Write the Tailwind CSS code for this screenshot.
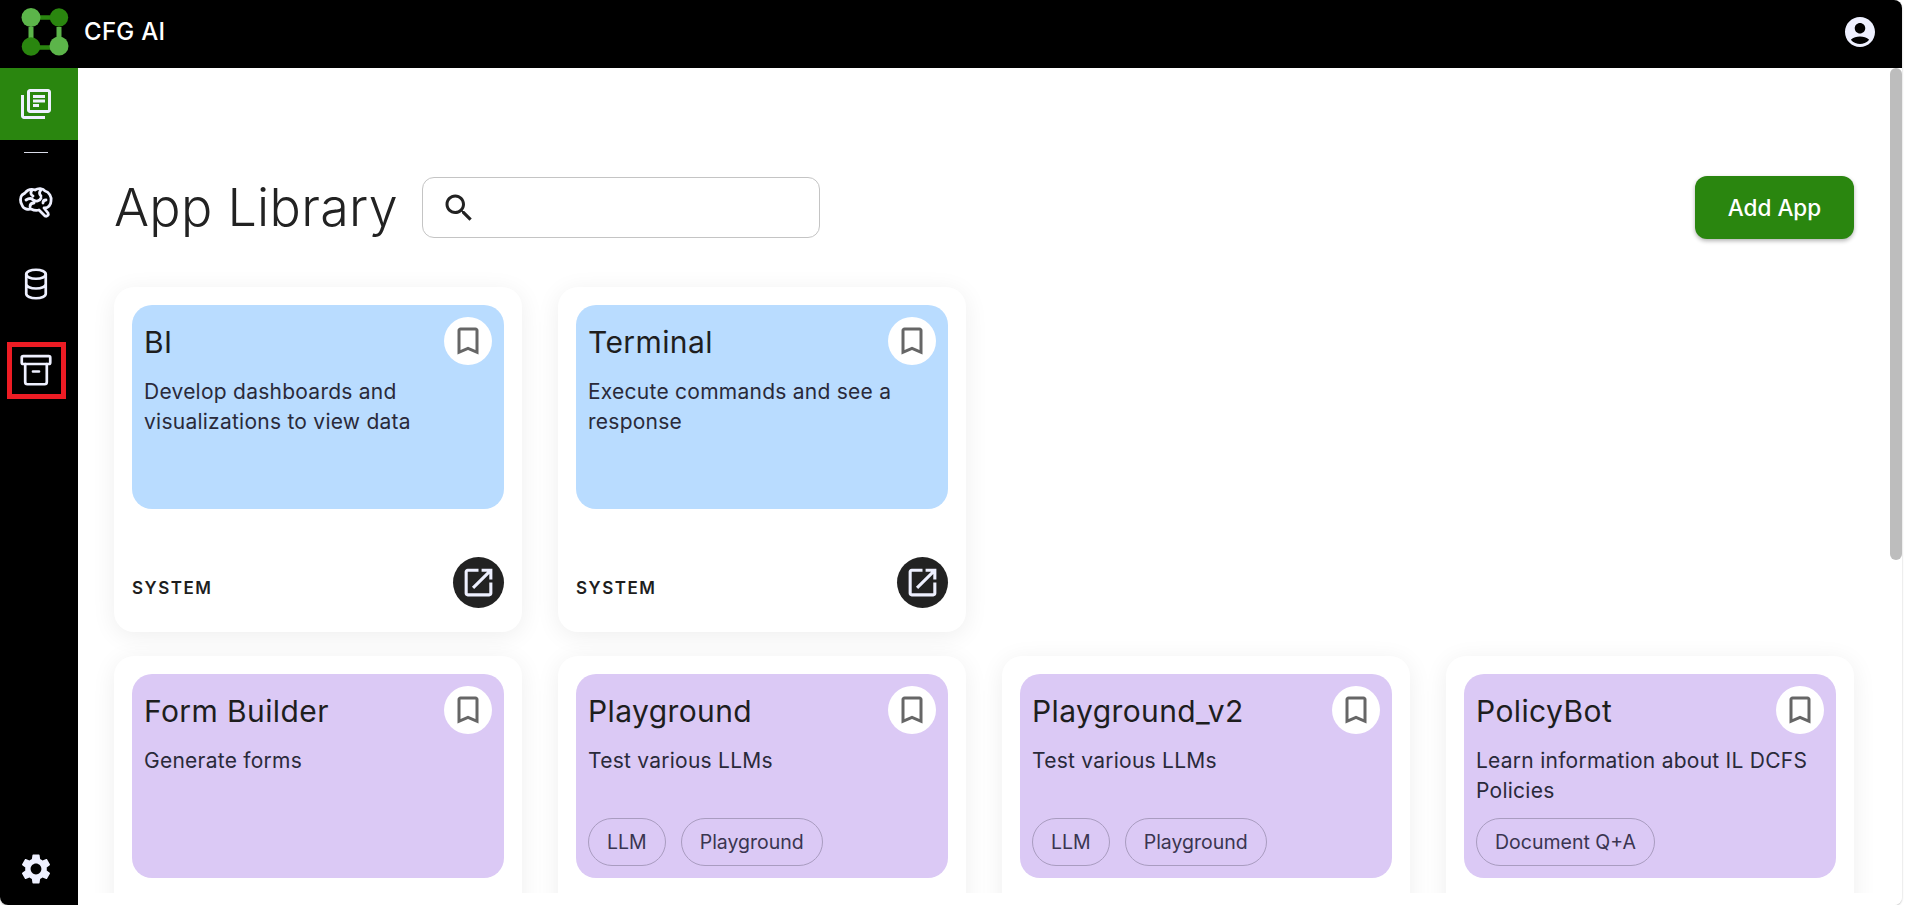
<!doctype html>
<html>
<head>
<meta charset="utf-8">
<script src="https://cdn.jsdelivr.net/npm/@tailwindcss/browser@4"></script>
</head>
<body class="bg-white font-['Inter',sans-serif] overflow-hidden">
<div class="w-[1902px] h-[905px] rounded-tr-[8px] rounded-b-[8px] overflow-hidden flex flex-col shadow-[0_1px_2px_rgba(0,0,0,0.25)]">
  <header class="h-[68px] shrink-0 bg-black flex items-center justify-between pl-[20px] pr-[24px]">
    <div class="flex items-center gap-[14px]">
      <svg width="50" height="52" viewBox="0 0 50 52" class="-mt-[4px]">
        <path d="M11 21v14M39 21v14" stroke="#5cb54a" stroke-width="5" fill="none"/>
        <path d="M18 11.500h16M16 41.500h16" stroke="#2a860f" stroke-width="4.500" fill="none"/>
        <circle cx="11" cy="11.500" r="9.500" fill="#5cb54a"/>
        <circle cx="39" cy="11.500" r="9.200" fill="#2a860f"/>
        <circle cx="11" cy="40.500" r="9.300" fill="#2a860f"/>
        <circle cx="39" cy="40" r="9.500" fill="#5cb54a"/>
      </svg>
      <span class="text-white text-[24px] font-medium tracking-[0.3px] -mt-[4px]">CFG AI</span>
    </div>
    <svg width="36" height="36" viewBox="0 0 24 24" fill="#eef0ff" class="-mt-[4px] mr-[0px]"><path d="M12 2C6.480 2 2 6.480 2 12s4.480 10 10 10 10-4.480 10-10S17.520 2 12 2zm0 4c1.930 0 3.500 1.570 3.500 3.500S13.930 13 12 13s-3.500-1.570-3.500-3.500S10.070 6 12 6zm0 14c-2.030 0-4.430-.82-6.140-2.880C7.550 15.800 9.680 15 12 15s4.450.8 6.140 2.120C16.430 19.180 14.030 20 12 20z"/></svg>
  </header>
  <div class="flex-1 flex min-h-0">
    <aside class="w-[78px] shrink-0 bg-black flex flex-col items-center relative pb-[18px] pr-[6px]">
      <div class="w-[78px] -mr-[6px] pr-[6px] h-[72px] bg-[#2a860f] flex items-center justify-center">
        <svg width="36" height="36" viewBox="0 0 24 24" fill="#eef0ff"><path d="M4 6H2v14c0 1.100.9 2 2 2h14v-2H4V6zm16-4H8c-1.100 0-2 .9-2 2v12c0 1.100.9 2 2 2h12c1.100 0 2-.9 2-2V4c0-1.100-.9-2-2-2zm0 14H8V4h12v12zM10 9h8v2h-8zm0 3h4v2h-4zm0-6h8v2h-8z"/></svg>
      </div>
      <div class="w-[24px] h-px bg-[#d8dbe8] mt-[12px]"></div>
      <svg class="mt-[23px]" width="48" height="48" viewBox="0 0 48 48" fill="none" stroke="#eef0ff" stroke-width="2.800" stroke-linecap="round" stroke-linejoin="round"><path d="M13 17c3-4 7-4 10-3 3-2 8-2 10 1 4 1 7 6 6 10 0 4-3 7-6 7h-1l4 5c1 2-1 4-3 3l-6-6c-3 1-6 0-8-1-3 1-8 0-9-4-2-3-2-8 0-10z"/><path d="M14 24c3-2 6-2 7 0 3 2 7 1 8-2M20 14c-2 3-1 5 1 6M29 14c-2 2-2 4 0 6M34 24c-2 0-3 1-3 3M18 31c0-2 1-4 4-4"/></svg>
      <svg class="mt-[42px]" width="36" height="36" viewBox="0 0 24 24" fill="none" stroke="#eef0ff" stroke-width="1.800" stroke-linecap="round" stroke-linejoin="round"><ellipse cx="12" cy="5.500" rx="6.500" ry="3"/><path d="M5.500 5.500v13c0 1.700 2.900 3 6.500 3s6.500-1.300 6.500-3v-13M5.500 12c0 1.700 2.900 3 6.500 3s6.500-1.300 6.500-3"/></svg>
      <svg class="mt-[50px]" width="36" height="36" viewBox="0 0 24 24" fill="none" stroke="#eef0ff" stroke-width="1.800" stroke-linecap="round" stroke-linejoin="round"><rect x="2.500" y="2.800" width="19" height="5.200" rx="1"/><path d="M4.800 8v12a1.500 1.500 0 0 0 1.500 1.500h11.400a1.500 1.500 0 0 0 1.500-1.500V8M10 13h4"/></svg>
      <div class="absolute left-[7px] top-[274px] w-[59px] h-[57px] border-[5px] border-[#ed1c24]"></div>
      <svg class="mt-auto" width="36" height="36" viewBox="0 0 24 24" fill="#eef0ff"><path d="M19.140 12.940c.04-.3.06-.61.06-.94 0-.32-.02-.64-.07-.94l2.030-1.580c.18-.14.23-.41.12-.61l-1.920-3.320c-.12-.22-.37-.29-.59-.22l-2.390.96c-.5-.38-1.030-.7-1.620-.94l-.36-2.540c-.04-.24-.24-.41-.48-.41h-3.840c-.24 0-.43.17-.47.41l-.36 2.540c-.59.24-1.130.57-1.620.94l-2.390-.96c-.22-.08-.47 0-.59.22L2.740 8.870c-.12.21-.08.47.12.61l2.030 1.580c-.05.3-.09.63-.09.94s.02.64.07.94l-2.030 1.580c-.18.14-.23.41-.12.61l1.920 3.320c.12.22.37.29.59.22l2.390-.96c.5.38 1.030.7 1.620.94l.36 2.540c.05.24.24.41.48.41h3.840c.24 0 .44-.17.47-.41l.36-2.540c.59-.24 1.130-.56 1.620-.94l2.390.96c.22.08.47 0 .59-.22l1.920-3.320c.12-.22.07-.47-.12-.61l-2.010-1.580zM12 15.600c-1.980 0-3.600-1.620-3.600-3.600s1.620-3.600 3.600-3.600 3.600 1.620 3.600 3.600-1.620 3.600-3.600 3.600z"/></svg>
    </aside>
    <main class="flex-1 min-w-0 flex">
      <div class="flex-1 min-w-0 h-[825px] overflow-hidden pl-[36px] pr-[36px] pt-[108px]">
        <div class="h-[63px] mb-[48px] flex items-center justify-between">
          <div class="flex items-center gap-[24px]">
            <h1 class="text-[52px] leading-[60px] font-light text-[#222] tracking-[0.3px]">App Library</h1>
            <div class="w-[398px] h-[61px] border border-[#c4c4c4] rounded-[12px] flex items-center pl-[18px]">
              <svg width="36" height="36" viewBox="0 0 24 24" fill="#222"><path d="M15.500 14h-.79l-.28-.27C15.410 12.590 16 11.110 16 9.500 16 5.910 13.090 3 9.500 3S3 5.910 3 9.500 5.910 16 9.500 16c1.610 0 3.090-.59 4.230-1.570l.27.28v.79l5 4.990L20.490 19l-4.990-5zm-6 0C7.010 14 5 11.990 5 9.500S7.010 5 9.500 5 14 7.010 14 9.500 11.990 14 9.500 14z"/></svg>
            </div>
          </div>
          <button class="w-[159px] h-[63px] rounded-[12px] bg-[#2a860f] text-white text-[22.500px] font-medium shadow-[0_2px_4px_rgba(0,0,0,0.3)]">Add App</button>
        </div>
        <div class="grid grid-cols-4 gap-x-[36px] gap-y-[24px]">
          <!-- row 1 -->
          <article class="h-[345px] bg-white rounded-[20px] shadow-[0_4px_24px_rgba(0,0,0,0.07)] p-[18px] flex flex-col">
            <div class="h-[204px] bg-[#b9dcff] rounded-[20px] p-[12px] flex flex-col">
              <div class="flex items-start justify-between">
                <h2 class="text-[30px] leading-[36px] tracking-[0.4px] text-[#1e1e1e] mt-[7px]">BI</h2>
                <div class="w-[48px] h-[48px] rounded-full bg-white flex items-center justify-center"><svg width="36" height="36" viewBox="0 0 24 24" fill="#666"><path d="M17 3H7c-1.100 0-1.990.9-1.990 2L5 21l7-3 7 3V5c0-1.100-.9-2-2-2zm0 15-5-2.180L7 18V5h10v13z"/></svg></div>
              </div>
              <p class="text-[21px] leading-[30px] text-[#2a2a3a] mt-[12px] tracking-[0.25px]">Develop dashboards and visualizations to view data</p>
            </div>
            <div class="mt-auto pb-[6px] flex items-center justify-between">
              <span class="text-[17px] font-semibold tracking-[1.500px] text-[#1e1e1e] mt-[12px]">SYSTEM</span>
              <div class="w-[51px] h-[51px] rounded-full bg-[#222] flex items-center justify-center"><svg width="37" height="37" viewBox="0 0 24 24" fill="#eef0ff"><path d="M19 19H5V5h7V3H5c-1.110 0-2 .9-2 2v14c0 1.100.89 2 2 2h14c1.100 0 2-.9 2-2v-7h-2v7zM14 3v2h3.590l-9.830 9.830 1.410 1.410L19 6.410V10h2V3h-7z"/></svg></div>
            </div>
          </article>
          <article class="h-[345px] bg-white rounded-[20px] shadow-[0_4px_24px_rgba(0,0,0,0.07)] p-[18px] flex flex-col">
            <div class="h-[204px] bg-[#b9dcff] rounded-[20px] p-[12px] flex flex-col">
              <div class="flex items-start justify-between">
                <h2 class="text-[30px] leading-[36px] tracking-[0.4px] text-[#1e1e1e] mt-[7px]">Terminal</h2>
                <div class="w-[48px] h-[48px] rounded-full bg-white flex items-center justify-center"><svg width="36" height="36" viewBox="0 0 24 24" fill="#666"><path d="M17 3H7c-1.100 0-1.990.9-1.990 2L5 21l7-3 7 3V5c0-1.100-.9-2-2-2zm0 15-5-2.180L7 18V5h10v13z"/></svg></div>
              </div>
              <p class="text-[21px] leading-[30px] text-[#2a2a3a] mt-[12px] tracking-[0.25px]">Execute commands and see a response</p>
            </div>
            <div class="mt-auto pb-[6px] flex items-center justify-between">
              <span class="text-[17px] font-semibold tracking-[1.500px] text-[#1e1e1e] mt-[12px]">SYSTEM</span>
              <div class="w-[51px] h-[51px] rounded-full bg-[#222] flex items-center justify-center"><svg width="37" height="37" viewBox="0 0 24 24" fill="#eef0ff"><path d="M19 19H5V5h7V3H5c-1.110 0-2 .9-2 2v14c0 1.100.89 2 2 2h14c1.100 0 2-.9 2-2v-7h-2v7zM14 3v2h3.590l-9.830 9.830 1.410 1.410L19 6.410V10h2V3h-7z"/></svg></div>
            </div>
          </article>
          <div></div><div></div>
          <!-- row 2 -->
          <article class="h-[345px] bg-white rounded-[20px] shadow-[0_4px_24px_rgba(0,0,0,0.07)] p-[18px]">
            <div class="h-[204px] bg-[#dbc9f5] rounded-[20px] p-[12px] flex flex-col">
              <div class="flex items-start justify-between">
                <h2 class="text-[30px] leading-[36px] tracking-[0.4px] text-[#1e1e1e] mt-[7px]">Form Builder</h2>
                <div class="w-[48px] h-[48px] rounded-full bg-white flex items-center justify-center"><svg width="36" height="36" viewBox="0 0 24 24" fill="#666"><path d="M17 3H7c-1.100 0-1.990.9-1.990 2L5 21l7-3 7 3V5c0-1.100-.9-2-2-2zm0 15-5-2.180L7 18V5h10v13z"/></svg></div>
              </div>
              <p class="text-[21px] leading-[30px] text-[#2a2a3a] mt-[12px] tracking-[0.25px]">Generate forms</p>
            </div>
          </article>
          <article class="h-[345px] bg-white rounded-[20px] shadow-[0_4px_24px_rgba(0,0,0,0.07)] p-[18px]">
            <div class="h-[204px] bg-[#dbc9f5] rounded-[20px] p-[12px] flex flex-col">
              <div class="flex items-start justify-between">
                <h2 class="text-[30px] leading-[36px] tracking-[0.4px] text-[#1e1e1e] mt-[7px]">Playground</h2>
                <div class="w-[48px] h-[48px] rounded-full bg-white flex items-center justify-center"><svg width="36" height="36" viewBox="0 0 24 24" fill="#666"><path d="M17 3H7c-1.100 0-1.990.9-1.990 2L5 21l7-3 7 3V5c0-1.100-.9-2-2-2zm0 15-5-2.180L7 18V5h10v13z"/></svg></div>
              </div>
              <p class="text-[21px] leading-[30px] text-[#2a2a3a] mt-[12px] tracking-[0.25px]">Test various LLMs</p>
              <div class="mt-auto flex gap-[15px]">
                <span class="h-[48px] px-[18px] pt-[2px] rounded-full border border-[#a99cc0] text-[19.500px] text-[#3a3550] flex items-center">LLM</span>
                <span class="h-[48px] px-[18px] pt-[2px] rounded-full border border-[#a99cc0] text-[19.500px] text-[#3a3550] flex items-center">Playground</span>
              </div>
            </div>
          </article>
          <article class="h-[345px] bg-white rounded-[20px] shadow-[0_4px_24px_rgba(0,0,0,0.07)] p-[18px]">
            <div class="h-[204px] bg-[#dbc9f5] rounded-[20px] p-[12px] flex flex-col">
              <div class="flex items-start justify-between">
                <h2 class="text-[30px] leading-[36px] tracking-[0.4px] text-[#1e1e1e] mt-[7px]">Playground_v2</h2>
                <div class="w-[48px] h-[48px] rounded-full bg-white flex items-center justify-center"><svg width="36" height="36" viewBox="0 0 24 24" fill="#666"><path d="M17 3H7c-1.100 0-1.990.9-1.990 2L5 21l7-3 7 3V5c0-1.100-.9-2-2-2zm0 15-5-2.180L7 18V5h10v13z"/></svg></div>
              </div>
              <p class="text-[21px] leading-[30px] text-[#2a2a3a] mt-[12px] tracking-[0.25px]">Test various LLMs</p>
              <div class="mt-auto flex gap-[15px]">
                <span class="h-[48px] px-[18px] pt-[2px] rounded-full border border-[#a99cc0] text-[19.500px] text-[#3a3550] flex items-center">LLM</span>
                <span class="h-[48px] px-[18px] pt-[2px] rounded-full border border-[#a99cc0] text-[19.500px] text-[#3a3550] flex items-center">Playground</span>
              </div>
            </div>
          </article>
          <article class="h-[345px] bg-white rounded-[20px] shadow-[0_4px_24px_rgba(0,0,0,0.07)] p-[18px]">
            <div class="h-[204px] bg-[#dbc9f5] rounded-[20px] p-[12px] flex flex-col">
              <div class="flex items-start justify-between">
                <h2 class="text-[30px] leading-[36px] tracking-[0.4px] text-[#1e1e1e] mt-[7px]">PolicyBot</h2>
                <div class="w-[48px] h-[48px] rounded-full bg-white flex items-center justify-center"><svg width="36" height="36" viewBox="0 0 24 24" fill="#666"><path d="M17 3H7c-1.100 0-1.990.9-1.990 2L5 21l7-3 7 3V5c0-1.100-.9-2-2-2zm0 15-5-2.180L7 18V5h10v13z"/></svg></div>
              </div>
              <p class="text-[21px] leading-[30px] text-[#2a2a3a] mt-[12px] tracking-[0.25px]">Learn information about IL DCFS Policies</p>
              <div class="mt-auto flex gap-[15px]">
                <span class="h-[48px] px-[18px] pt-[2px] rounded-full border border-[#a99cc0] text-[19.500px] text-[#3a3550] flex items-center">Document Q+A</span>
              </div>
            </div>
          </article>
        </div>
      </div>
      <div class="w-[12px] shrink-0 bg-white">
        <div class="h-[492px] bg-[#bdbdbd] rounded-full"></div>
      </div>
    </main>
  </div>
</div>
</body>
</html>
